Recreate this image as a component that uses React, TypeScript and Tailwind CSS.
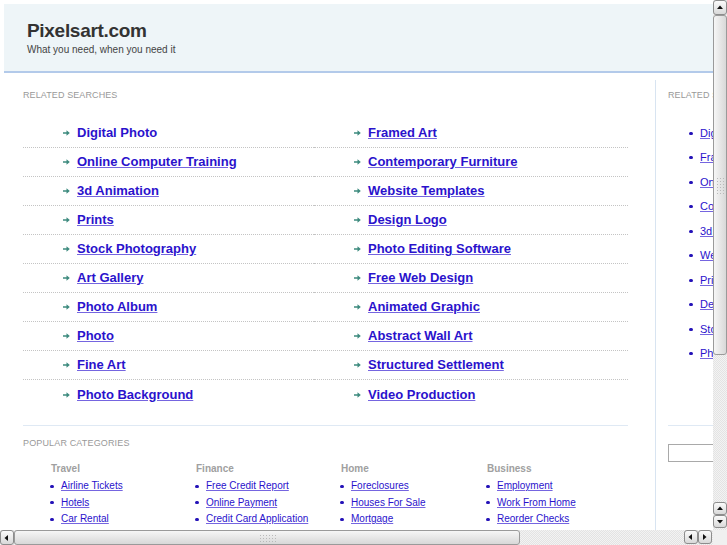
import React from "react";

const leftLinks = [
  "Digital Photo",
  "Online Computer Training",
  "3d Animation",
  "Prints",
  "Stock Photography",
  "Art Gallery",
  "Photo Album",
  "Photo",
  "Fine Art",
  "Photo Background",
];
const rightLinks = [
  "Framed Art",
  "Contemporary Furniture",
  "Website Templates",
  "Design Logo",
  "Photo Editing Software",
  "Free Web Design",
  "Animated Graphic",
  "Abstract Wall Art",
  "Structured Settlement",
  "Video Production",
];
const sideLinks = [
  "Digital Photo",
  "Framed Art",
  "Online Computer Training",
  "Contemporary Furniture",
  "3d Animation",
  "Website Templates",
  "Prints",
  "Design Logo",
  "Stock Photography",
  "Photo Editing Software",
];
const categories = [
  { title: "Travel", links: ["Airline Tickets", "Hotels", "Car Rental"] },
  { title: "Finance", links: ["Free Credit Report", "Online Payment", "Credit Card Application"] },
  { title: "Home", links: ["Foreclosures", "Houses For Sale", "Mortgage"] },
  { title: "Business", links: ["Employment", "Work From Home", "Reorder Checks"] },
];

const Arrow = () => (
  <svg width="7" height="6" viewBox="0 0 7 6" className="shrink-0">
    <path d="M0 2.2h3.5V0.3L6.8 3 3.5 5.7V3.8H0z" fill="#3d8a7e" />
  </svg>
);

const Tri = ({ dir }: { dir: "up" | "down" | "left" | "right" }) => {
  const d = {
    up: "M1 5L4 1.5 7 5z",
    down: "M1 2L4 5.5 7 2z",
    left: "M5 1L1.5 4 5 7z",
    right: "M2 1L5.5 4 2 7z",
  }[dir];
  return (
    <svg width="8" height="8" viewBox="0 0 8 8">
      <path d={d} fill="#111" />
    </svg>
  );
};

const ScrollBtn = ({ dir, className }: { dir: "up" | "down" | "left" | "right"; className: string }) => (
  <div
    className={
      "flex items-center justify-center rounded-[3px] border border-[#8d8d8d] bg-gradient-to-b from-[#fbfbfb] to-[#d9d9d9] " +
      className
    }
  >
    <Tri dir={dir} />
  </div>
);

const Grip = ({ vertical }: { vertical?: boolean }) => (
  <div
    className={
      (vertical ? "h-[17px] w-[8px]" : "h-[8px] w-[17px]") +
      " bg-[radial-gradient(#b9b9b9_0.6px,transparent_0.8px)] bg-[length:3px_3px]"
    }
  />
);

export default function App() {
  return (
    <div className="flex h-[545px] w-[727px] flex-col overflow-hidden bg-white font-['Liberation_Sans',Arial,sans-serif]">
      <div className="flex h-[530px]">
        <div className="w-[713px] overflow-hidden">
          <div className="w-[944px] pl-1 pt-1">
            <header className="h-[69px] border-b-2 border-[#b3caea] bg-[#eef5f8] pl-[23px] pt-[16px]">
              <h1 className="text-[19px] font-bold leading-[22px] tracking-[-0.3px] text-[#333]">Pixelsart.com</h1>
              <p className="mt-[2px] text-[10px] leading-[12px] text-[#444]">What you need, when you need it</p>
            </header>

            <div className="mt-[7px] flex">
              <main className="w-[652px] shrink-0 border-r border-[#d8e4f1] pb-[10px] pl-[19px] pt-[9px]">
                <h2 className="text-[9px] leading-[12px] tracking-[0.1px] text-[#999]">RELATED SEARCHES</h2>

                <div className="mt-[18px] grid w-[605px] grid-cols-[291px_314px]">
                  {[leftLinks, rightLinks].map((col, ci) => (
                    <ul key={ci}>
                      {col.map((l, i) => (
                        <li
                          key={l}
                          className={
                            "flex h-[29px] items-center gap-[7px] pl-[40px] " +
                            (i < col.length - 1 ? "border-b border-dotted border-[#c4c4c4]" : "")
                          }
                        >
                          <Arrow />
                          <a
                            href="#"
                            className={
                              "text-[13px] font-bold leading-[16px] text-[#2a12cc] decoration-[#7565e0] " +
                              (ci === 0 && i === 0 ? "no-underline" : "underline")
                            }
                          >
                            {l}
                          </a>
                        </li>
                      ))}
                    </ul>
                  ))}
                </div>

                <div className="mt-[16px] w-[605px] border-t border-[#dfe9f4]" />
                <h2 className="mt-[11px] text-[9px] leading-[12px] tracking-[0.15px] text-[#999]">POPULAR CATEGORIES</h2>

                <div className="mt-[14px] grid w-[605px] grid-cols-[145px_145px_146px_145px] pl-[28px]">
                  {categories.map((c) => (
                    <div key={c.title}>
                      <h3 className="text-[10px] font-bold leading-[12px] text-[#a0a0a0]">{c.title}</h3>
                      <ul className="mt-[3px]">
                        {c.links.map((l) => (
                          <li key={l} className="-ml-px flex h-[16.5px] items-center gap-[7px]">
                            <span className="h-[3px] w-[4px] rounded-full bg-[#2412b8]" />
                            <a href="#" className="whitespace-nowrap text-[10px] leading-[12px] text-[#2a12cc] underline decoration-[#7565e0]">
                              {l}
                            </a>
                          </li>
                        ))}
                      </ul>
                    </div>
                  ))}
                </div>
              </main>

              <aside className="flex-1 pl-[12px] pt-[9px]">
                <h2 className="whitespace-nowrap text-[9px] leading-[12px] tracking-[0.1px] text-[#999]">RELATED SEARCHES</h2>
                <ul className="mt-[20px]">
                  {sideLinks.map((l) => (
                    <li key={l} className="flex h-[24.5px] items-center gap-[7px] pl-[21px]">
                      <span className="h-[3px] w-[4px] rounded-full bg-[#2412b8]" />
                      <a href="#" className="whitespace-nowrap text-[11px] leading-[13px] text-[#2a12cc] underline decoration-[#7565e0]">
                        {l}
                      </a>
                    </li>
                  ))}
                </ul>
                <div className="mt-[59px] border-t border-[#dfe9f4]" />
                <input type="text" className="mt-[18px] h-[18px] w-[140px] border border-[#a9a9a9] bg-white outline-none" />
              </aside>
            </div>
          </div>
        </div>

        <div className="flex w-[14px] flex-col bg-[#ececec] bg-[repeating-conic-gradient(#e3e3e3_0_25%,#f3f3f3_0_50%)] bg-[length:2px_2px]">
          <ScrollBtn dir="up" className="h-[15px] w-[14px]" />
          <div className="flex h-[340px] items-center justify-center rounded-[3px] border border-[#9a9a9a] bg-gradient-to-r from-[#f6f6f6] to-[#d8d8d8]">
            <Grip vertical />
          </div>
          <div className="flex-1" />
          <ScrollBtn dir="up" className="h-[13px] w-[14px]" />
          <ScrollBtn dir="down" className="mb-[2px] h-[13px] w-[14px]" />
        </div>
      </div>

      <div className="flex h-[15px]">
        <div className="flex w-[713px] bg-[#ececec] bg-[repeating-conic-gradient(#e3e3e3_0_25%,#f3f3f3_0_50%)] bg-[length:2px_2px]">
          <ScrollBtn dir="left" className="h-[15px] w-[14px]" />
          <div className="flex w-[506px] items-center justify-center rounded-[3px] border border-[#9a9a9a] bg-gradient-to-b from-[#f6f6f6] to-[#d8d8d8]">
            <Grip />
          </div>
          <div className="flex-1" />
          <ScrollBtn dir="left" className="h-[14px] w-[14px]" />
          <ScrollBtn dir="right" className="mr-[1px] h-[14px] w-[14px]" />
        </div>
        <div className="flex-1 bg-[#f0f0f0]" />
      </div>
    </div>
  );
}
